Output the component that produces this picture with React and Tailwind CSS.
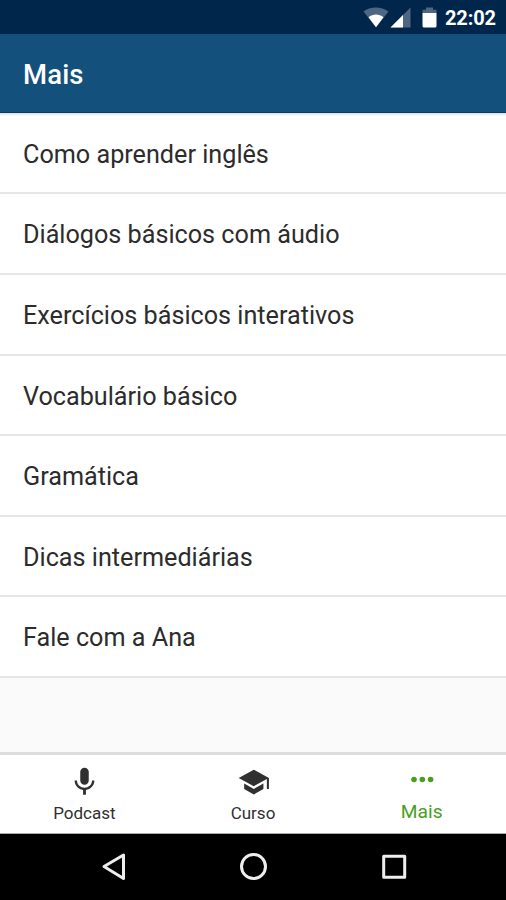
import React from 'react';

const items = [
  { label: 'Como aprender inglês', size: 'h-[81px] pt-[4px]' },
  { label: 'Diálogos básicos com áudio', size: 'h-[81px] pt-[3px]' },
  { label: 'Exercícios básicos interativos', size: 'h-[81px] pt-[3px]' },
  { label: 'Vocabulário básico', size: 'h-[80px] pt-[3px]' },
  { label: 'Gramática', size: 'h-[81px] pt-[3px]' },
  { label: 'Dicas intermediárias', size: 'h-[80px] pt-[3px]' },
  { label: 'Fale com a Ana', size: 'h-[81px] pt-[3px]' },
];

function StatusBar() {
  return (
    <div className="flex h-[34px] shrink-0 items-start justify-end bg-[#01264c] pr-[10px] text-white">
      <svg className="mt-[6px] h-[22px] w-[76px]" viewBox="0 0 76 22" aria-hidden="true">
        <path d="M.5 5.5C7 .2 18 .2 25.500 5.500L13 21.500Z" fill="#4d6782" />
        <path d="M5.500 11.200C10 7.600 16 7.600 20.500 11.200L13 21.200Z" fill="#fff" />
        <path d="M27.500 21.500L47.500 1.500V21.500Z" fill="#4d6782" />
        <path d="M27.500 21.500L40 9V21.500Z" fill="#fff" />
        <path d="M59.500 7V3.800H63V1.500H70V3.800H73.500V7Z" fill="#4d6782" />
        <path d="M59.500 7H73.500V20Q73.500 21.500 72 21.500H61Q59.500 21.500 59.500 20Z" fill="#fff" />
      </svg>
      <span className="ml-[6px] mt-[6px] text-[20px] font-bold leading-6 tracking-[-0.1px]">22:02</span>
    </div>
  );
}

function Tab({ label, active, children }) {
  return (
    <div className={active ? 'flex flex-1 flex-col items-center text-[#47a01e]' : 'flex flex-1 flex-col items-center text-[#303030]'}>
      <svg className="mt-[10px] h-[34px] w-[34px]" viewBox="0 0 34 34" fill="currentColor" aria-hidden="true">
        {children}
      </svg>
      <span className={active ? 'mt-[1px] text-[19.2px] leading-6' : 'mt-[2px] text-[17px] leading-6'}>{label}</span>
    </div>
  );
}

export default function App() {
  return (
    <div className="flex h-[900px] w-[506px] flex-col overflow-hidden bg-[#fafafa] font-[Roboto,sans-serif]">
      <StatusBar />
      <header className="flex h-[79px] shrink-0 items-center border-b border-[#0a386c] bg-[#13507b] pl-[23px] pt-[3px]">
        <h1 className="text-[27.5px] font-medium leading-8 tracking-[0.15px] text-white">Mais</h1>
      </header>
      <ul className="shrink-0 bg-white bg-linear-to-b from-[#dddddd] to-white to-[3px]">
        {items.map((item) => (
          <li key={item.label} className={item.size + ' flex items-center border-b-2 border-[#e6e6e6] pl-[23px] text-[25.2px] text-[#2c2c2c]'}>
            {item.label}
          </li>
        ))}
      </ul>
      <div className="flex-1" />
      <nav className="flex h-[82px] shrink-0 border-b border-t-[3px] border-b-[#aaaaaa] border-t-[#dddddd] bg-white">
        <Tab label="Podcast">
          <path transform="translate(.5 0) scale(1.417)" d="M12 14c1.66 0 3-1.34 3-3V5c0-1.66-1.34-3-3-3S9 3.34 9 5v6c0 1.66 1.34 3 3 3zm5.3-3c0 3-2.54 5.1-5.3 5.1S6.700 14 6.700 11H5c0 3.410 2.720 6.230 6 6.720V21h2v-3.280c3.280-.48 6-3.300 6-6.720h-1.700z" />
        </Tab>
        <Tab label="Curso">
          <path transform="translate(1.3 .5) scale(1.375)" d="M5 13.180v4L12 21l7-3.820v-4L12 17l-7-3.820zM12 3L1 9l11 6 9.500-5.180V17H23V9L12 3z" />
        </Tab>
        <Tab label="Mais" active>
          <circle cx="9" cy="14.500" r="2.800" />
          <circle cx="17.300" cy="14.500" r="2.800" />
          <circle cx="25.600" cy="14.500" r="2.800" />
        </Tab>
      </nav>
      <div className="flex h-[66px] shrink-0 items-center justify-center bg-black">
        <svg className="h-[32px] w-[310px]" viewBox="0 0 310 32" fill="none" stroke="#eeeeee" strokeWidth="3" strokeLinejoin="round" aria-hidden="true">
          <path d="M6 15.500L25.500 4V27.500Z" />
          <circle cx="155.500" cy="15.500" r="12" />
          <rect x="285.700" y="5.200" width="21" height="21" />
        </svg>
      </div>
    </div>
  );
}
